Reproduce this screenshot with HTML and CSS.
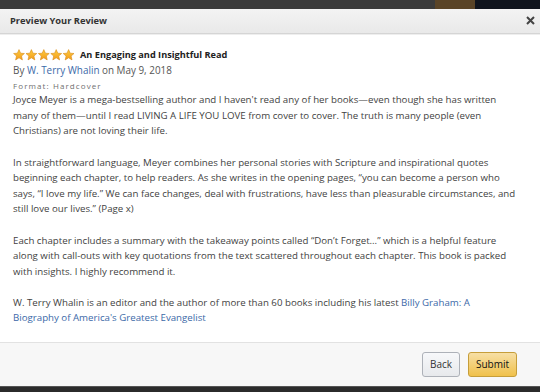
FILE: index.html
```html
<!DOCTYPE html>
<html lang="en">
<head>
    <meta charset="UTF-8">
    <title>Preview Your Review</title>
    <link rel="stylesheet" href="styles.css">
</head>
<body>
    <div class="topbar">
        <div class="topbar-fill"></div>
        <div class="topbar-thumb"></div>
        <div class="topbar-dark"></div>
    </div>
    <div class="dialog">
        <div class="dialog-header">
            <h1>Preview Your Review</h1>
            <button class="close-btn" aria-label="Close">
                <svg width="9" height="9" viewBox="0 0 9 9"><path d="M1 1L8 8M8 1L1 8" stroke="#444" stroke-width="2"/></svg>
            </button>
        </div>
        <div class="dialog-body">
            <div class="review-head">
                <span class="stars">
                    <svg width="62" height="12" viewBox="0 0 62 12">
                        <defs>
                            <linearGradient id="g" x1="0" y1="0" x2="0" y2="1">
                                <stop offset="0" stop-color="#ffce3d"/>
                                <stop offset="1" stop-color="#f29b1d"/>
                            </linearGradient>
                            <path id="star" d="M6 0.6L7.6 4.2L11.4 4.5L8.5 7L9.4 10.9L6 8.8L2.6 10.9L3.5 7L0.6 4.5L4.4 4.2Z" fill="url(#g)" stroke="#d88a14" stroke-width="0.6"/>
                        </defs>
                        <use href="#star" x="0"/>
                        <use href="#star" x="12.4"/>
                        <use href="#star" x="24.8"/>
                        <use href="#star" x="37.2"/>
                        <use href="#star" x="49.6"/>
                    </svg>
                </span>
                <span class="review-title">An Engaging and Insightful Read</span>
            </div>
            <div class="byline">By <a href="#">W. Terry Whalin</a> on May 9, 2018</div>
            <div class="format">Format: Hardcover</div>
            <div class="review-text">
                <p>Joyce Meyer is a mega-bestselling author and I haven't read any of her books—even though she has written<br>
                many of them—until I read LIVING A LIFE YOU LOVE from cover to cover. The truth is many people (even<br>
                Christians) are not loving their life.</p>
                <p>In straightforward language, Meyer combines her personal stories with Scripture and inspirational quotes<br>
                beginning each chapter, to help readers. As she writes in the opening pages, “you can become a person who<br>
                says, “I love my life.” We can face changes, deal with frustrations, have less than pleasurable circumstances, and<br>
                still love our lives.” (Page x)</p>
                <p>Each chapter includes a summary with the takeaway points called “Don’t Forget…” which is a helpful feature<br>
                along with call-outs with key quotations from the text scattered throughout each chapter. This book is packed<br>
                with insights. I highly recommend it.</p>
                <p>W. Terry Whalin is an editor and the author of more than 60 books including his latest <a href="#">Billy Graham: A<br>
                Biography of America's Greatest Evangelist</a></p>
            </div>
        </div>
        <div class="dialog-footer">
            <button class="btn btn-back">Back</button>
            <button class="btn btn-submit">Submit</button>
        </div>
    </div>
    <div class="bottombar"></div>
</body>
</html>
```

FILE: styles.css
```css
html, body { margin: 0; padding: 0; width: 540px; height: 392px; overflow: hidden; background: #2b2b2b; font-family: 'Open Sans', 'Liberation Sans', sans-serif; }
* { box-sizing: border-box; }

.topbar { display: flex; height: 9px; }
.topbar-fill { flex: 1; background: #3b3b3b; }
.topbar-thumb { width: 40px; background: #5a4427; }
.topbar-dark { width: 65px; background: #10141d; }

.dialog { background: #fff; display: flex; flex-direction: column; height: 377px; }

.dialog-header { display: flex; align-items: center; justify-content: space-between; height: 26px; padding: 0 5px 0 10px; background: linear-gradient(#f3f3f3, #e9e9e9); border-bottom: 1px solid #d5d5d5; box-shadow: 0 1px 0 #eee; }
.dialog-header h1 { margin: 0; font-size: 9.3px; font-weight: 700; color: #333; }
.close-btn { border: 0; background: none; padding: 0; display: flex; cursor: pointer; }

.dialog-body { flex: 1; padding: 13px 4px 0 13px; color: #3f3f3f; font-size: 9.7px; line-height: 15.6px; }
.review-head { display: flex; align-items: center; gap: 5px; height: 16px; }
.stars { display: flex; }
.review-title { font-weight: 700; color: #222; font-size: 9.2px; }
.byline { color: #555; font-size: 9.9px; }
.byline a, .review-text a { color: #3b69a8; text-decoration: none; }
.format { font-size: 8px; letter-spacing: 1.1px; color: #6f6f6f; line-height: 12px; margin-top: 2px; }
.review-text p { margin: 0 0 15.6px; }

.dialog-footer { height: 47px; background: #f7f7f7; border-top: 1px solid #e2e2e2; display: flex; justify-content: flex-end; align-items: center; gap: 8px; padding: 0 23px 0 0; }
.btn { font-family: inherit; font-size: 10px; height: 25px; border-radius: 3px; padding: 0; cursor: pointer; }
.btn-back { width: 38px; background: linear-gradient(#f7f8fa, #e7e9ec); border: 1px solid #adb1b8; color: #333; }
.btn-submit { width: 49px; background: linear-gradient(#f7dfa5, #f0c14b); border: 1px solid #c69e3a; color: #111; }

.bottombar { height: 6px; background: #2b2b2b; border-top: 1px solid #555; }
```
